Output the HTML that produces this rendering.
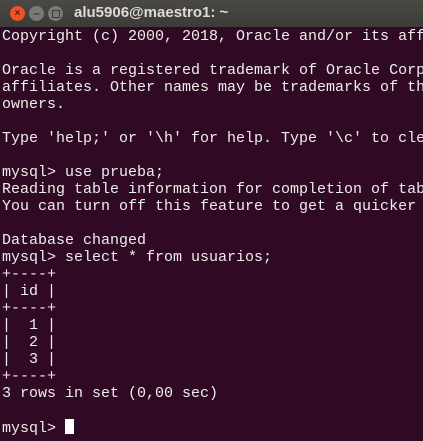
<!DOCTYPE html>
<html><head><style>
body{margin:0;width:423px;height:441px;background:#300a24;overflow:hidden;position:relative}
.tb{position:absolute;left:0;top:0;width:423px;height:27px;background:linear-gradient(#4a4944,#3c3b37);}
.t{position:absolute;left:74px;top:4px;color:#dfdbd2;font:bold 15px "Liberation Sans",sans-serif}
.b{position:absolute;top:6px;width:15px;height:15px;border-radius:50%;}
pre{position:absolute;left:2px;top:28px;width:421px;overflow:hidden;margin:0;color:#eeeeec;font:15px/17px "Liberation Mono",monospace;white-space:pre}
.cur{display:inline-block;width:9px;height:15px;background:#fff;vertical-align:-2px}
</style></head><body>
<div class="tb"></div>
<div class="b" style="left:10px;background:#e9542b;color:#5a1b0a;font:bold 10px/15px sans-serif;text-align:center">×</div>
<div class="b" style="left:29px;background:#7a7973;color:#3c3b37;font:bold 12px/14px sans-serif;text-align:center">–</div>
<div class="b" style="left:48px;background:#7a7973;"><div style="position:absolute;left:4px;top:4px;width:6px;height:6px;border:1px solid #3c3b37"></div></div>
<div class="t">alu5906@maestro1: ~</div>
<pre>Copyright (c) 2000, 2018, Oracle and/or its aff

Oracle is a registered trademark of Oracle Corp
affiliates. Other names may be trademarks of th
owners.

Type 'help;' or '\h' for help. Type '\c' to cle

mysql&gt; use prueba;
Reading table information for completion of tab
You can turn off this feature to get a quicker 

Database changed
mysql&gt; select * from usuarios;
+----+
| id |
+----+
|  1 |
|  2 |
|  3 |
+----+
3 rows in set (0,00 sec)

mysql&gt; <span class="cur"></span></pre>
</body></html>
